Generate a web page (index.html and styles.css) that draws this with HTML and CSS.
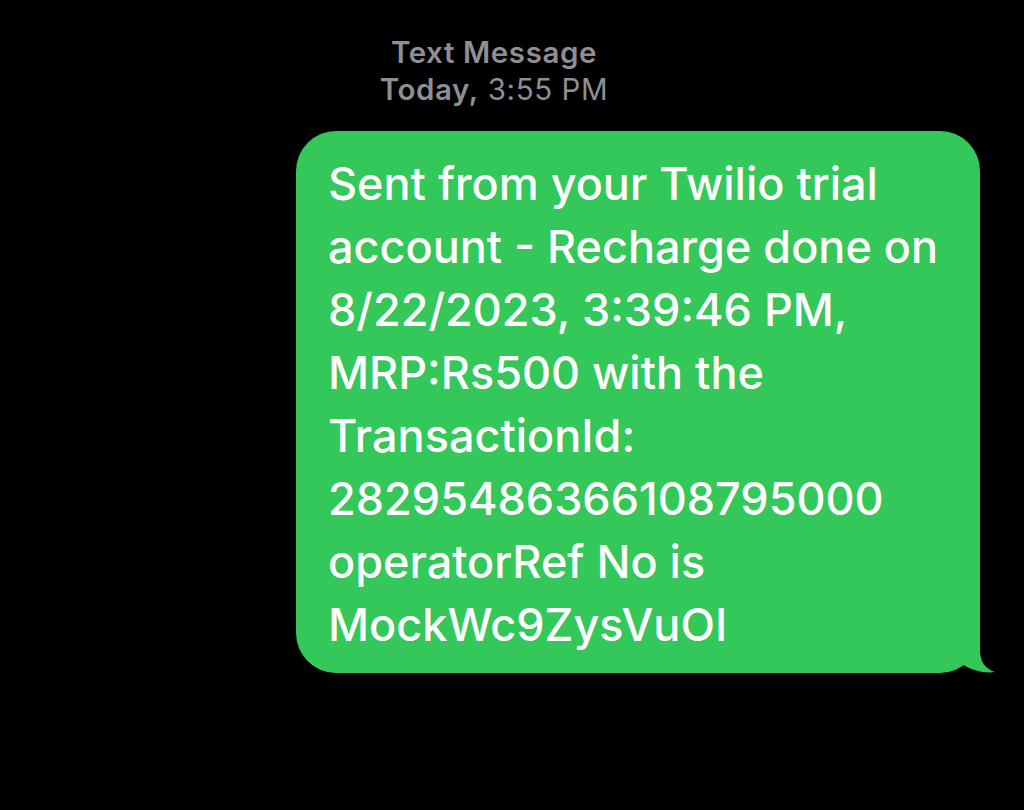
FILE: index.html
```html
<!DOCTYPE html>
<html lang="en">
<head>
<meta charset="utf-8">
<title>Text Message</title>
<link rel="stylesheet" href="styles.css">
</head>
<body>
<main class="thread">
  <header class="meta">
    <div class="meta-title">Text Message</div>
    <div class="meta-time"><strong>Today,</strong> 3:55 PM</div>
  </header>
  <div class="bubble">
    <p class="bubble-text">Sent from your Twilio trial<br>account - Recharge done on<br>8/22/2023, 3:39:46 PM,<br>MRP:Rs500 with the<br>TransactionId:<br>28295486366108795000<br>operatorRef No is<br>MockWc9ZysVuOI</p>
    <svg class="tail" width="56" height="50" viewBox="0 0 56 50" aria-hidden="true">
      <path d="M0,0 H40 V26 C40,40 46,46 55,49 C46,50.5 32,48 22,41 C17,46 10,49 0,49 Z" fill="#34c759"/>
    </svg>
  </div>
</main>
</body>
</html>
```

FILE: styles.css
```css
html, body {
  margin: 0;
  padding: 0;
  background: #000;
}

body {
  width: 1024px;
  height: 810px;
  overflow: hidden;
  font-family: Inter, "Liberation Sans", sans-serif;
}

.thread {
  display: flex;
  flex-direction: column;
  padding-top: 34px;
}

.meta {
  text-align: center;
  color: #8e8e93;
  font-size: 29.5px;
  letter-spacing: 0.6px;
  line-height: 37px;
  padding-right: 36px;
  font-weight: 600;
}

.meta-time {
  font-weight: 400;
}

.meta-time strong {
  font-weight: 600;
}

.bubble {
  position: relative;
  margin-top: 23px;
  margin-left: 296px;
  width: 684px;
  box-sizing: border-box;
  background: #34c759;
  border-radius: 40px;
  padding: 21px 20px 17px 32px;
}

.bubble-text {
  margin: 0;
  color: #fff;
  font-size: 45px;
  line-height: 63px;
  font-weight: 500;
}

.tail {
  position: absolute;
  right: -16px;
  bottom: 0;
  display: block;
}
```
